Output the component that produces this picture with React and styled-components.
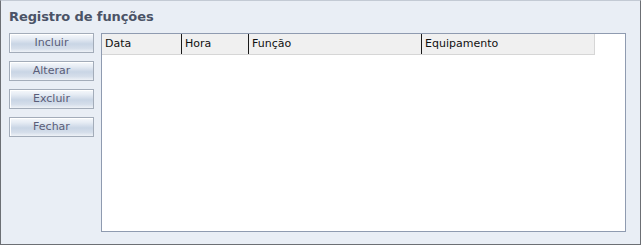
import React from 'react';
import styled, { createGlobalStyle } from 'styled-components';

const GlobalStyle = createGlobalStyle`
body {
  margin: 0;
  background: #e9eef5;
  font-family: "DejaVu Sans", Verdana, sans-serif;
}
`;

export const Frame = styled.div`
width: 641px;
height: 245px;
box-sizing: border-box;
background-color: #e9eef5;
border: 1px solid #6c6f74;
border-top-color: #c3cad4;
display: flex;
flex-direction: column;
`;

export const Title = styled.div`
height: 32px;
box-sizing: border-box;
padding: 8px 0 0 8px;
font-size: 13px;
font-weight: bold;
color: #4b5366;
line-height: 16px;
letter-spacing: -0.1px;
`;

export const Content = styled.div`
display: flex;
padding-left: 8px;
gap: 7px;
`;

export const ButtonColumn = styled.div`
display: flex;
flex-direction: column;
gap: 8px;
width: 85px;
`;

export const Button = styled.button`
width: 85px;
height: 20px;
padding: 0;
box-sizing: border-box;
border: 1px solid #a3acb9;
border-radius: 0;
background: linear-gradient(
  to bottom,
  #f7f9fc 0%,
  #e6ecf4 25%,
  #c9d5e5 55%,
  #d5deea 80%,
  #eef2f7 100%
);
box-shadow: inset 1px 1px 0 #ffffff;
font-family: "DejaVu Sans", Verdana, sans-serif;
font-size: 11px;
color: #5a5d78;
line-height: 18px;
cursor: default;
`;

export const Grid = styled.div`
width: 525px;
height: 199px;
box-sizing: border-box;
background: #ffffff;
border: 1px solid #8f9bb0;
`;

export const HeaderRow = styled.div`
display: flex;
width: 493px;
height: 21px;
box-sizing: border-box;
background: #f0f0f0;
border-bottom: 1px solid #d6d6d6;
border-right: 1px solid #d6d6d6;
`;

export const HeaderCell = styled.div`
width: ${(p) => p.w}px;
box-sizing: border-box;
padding-left: 3px;
font-size: 11px;
line-height: 20px;
color: #111111;
border-right: ${(p) => (p.last ? 'none' : '1px solid #1a1a1a')};
white-space: nowrap;
`;

const columns = [
  { label: 'Data', w: 80 },
  { label: 'Hora', w: 67 },
  { label: 'Função', w: 173 },
  { label: 'Equipamento', w: 172, last: true },
];

const buttons = ['Incluir', 'Alterar', 'Excluir', 'Fechar'];

export default function App() {
  return (
    <>
      <GlobalStyle />
      <Frame>
        <Title>Registro de funções</Title>
        <Content>
          <ButtonColumn>
            {buttons.map((b) => (
              <Button key={b}>{b}</Button>
            ))}
          </ButtonColumn>
          <Grid>
            <HeaderRow>
              {columns.map((c) => (
                <HeaderCell key={c.label} w={c.w} last={c.last}>
                  {c.label}
                </HeaderCell>
              ))}
            </HeaderRow>
          </Grid>
        </Content>
      </Frame>
    </>
  );
}
